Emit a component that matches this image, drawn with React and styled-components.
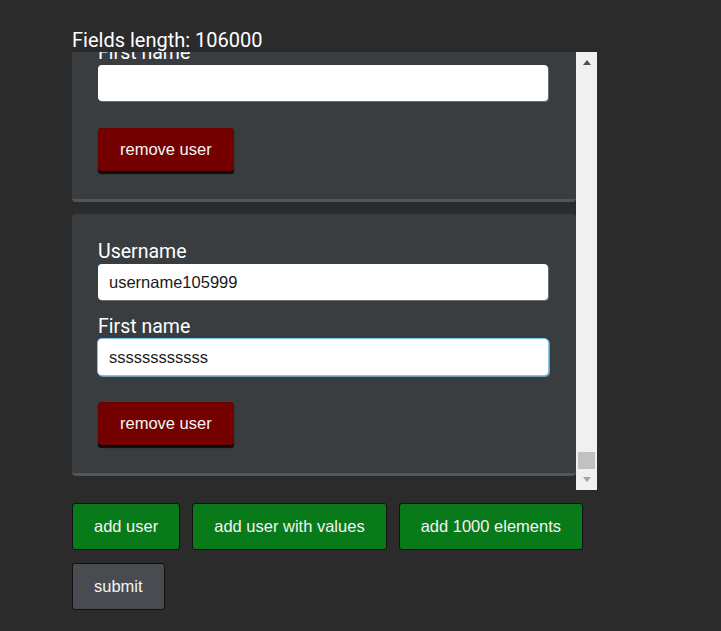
import React from 'react'
import styled, { createGlobalStyle, css } from 'styled-components'

const users = [
  { id: 105998, username: '', firstName: '' },
  { id: 105999, username: 'username105999', firstName: 'ssssssssssss', focused: true },
]

const App = () => {
  return (
    <>
      <GlobalStyle />
      <Page>
        <Title>Fields length: 106000</Title>
        <ListFrame>
          <Viewport>
            {users.map((user) => (
              <UserCard key={user.id}>
                <Field>
                  <Label>Username</Label>
                  <TextInput defaultValue={user.username} />
                </Field>
                <Field>
                  <Label>First name</Label>
                  <TextInput defaultValue={user.firstName} $focused={user.focused} />
                </Field>
                <RemoveButton>remove user</RemoveButton>
              </UserCard>
            ))}
          </Viewport>
          <ScrollBar>
            <ArrowButton><Arrow $dir="up" /></ArrowButton>
            <Track>
              <Thumb />
            </Track>
            <ArrowButton><Arrow $dir="down" /></ArrowButton>
          </ScrollBar>
        </ListFrame>
        <Actions>
          <ActionButton>add user</ActionButton>
          <ActionButton>add user with values</ActionButton>
          <ActionButton>add 1000 elements</ActionButton>
        </Actions>
        <Actions>
          <ActionButton $variant="submit">submit</ActionButton>
        </Actions>
      </Page>
    </>
  )
}

export default App

const GlobalStyle = createGlobalStyle`
  html, body {
    margin: 0;
    padding: 0;
    background: #2b2b2b;
  }
  body {
    font-family: Roboto, "Liberation Sans", sans-serif;
    color: #ffffff;
    min-height: 100vh;
  }
`

const Page = styled.div`
  padding: 28px 0 0 72px;
  min-height: 100vh;
  box-sizing: border-box;
`

const Title = styled.div`
  font-size: 20px;
  line-height: 24px;
  color: #ffffff;
  position: relative;
  z-index: 1;
`

const ListFrame = styled.div`
  display: flex;
  width: 525px;
  height: 438px;
`

const Viewport = styled.div`
  flex: 1;
  display: flex;
  flex-direction: column;
  justify-content: flex-end;
  gap: 12px;
  padding-bottom: 14px;
  overflow: hidden;
`

const UserCard = styled.div`
  flex-shrink: 0;
  background: #3a3d40;
  border-bottom: 3px solid #545658;
  border-radius: 4px;
  padding: 27px 28px 28px 26px;
`

const Field = styled.div`
  & + & {
    margin-top: 16px;
  }
`

const Label = styled.label`
  display: block;
  font-size: 19.5px;
  line-height: 21px;
  margin-bottom: 2px;
  color: #ffffff;
`

const TextInput = styled.input`
  display: block;
  box-sizing: border-box;
  width: 100%;
  height: 36px;
  padding: 0 11px;
  border: none;
  border-radius: 4px;
  background: #ffffff;
  font-family: "Liberation Sans", Arial, sans-serif;
  font-size: 16.5px;
  color: #1a1a1a;
  outline: none;
  box-shadow: 1px 1px 0 #6c6c6c;

  ${({ $focused }) => $focused && css`
    box-shadow: 0 0 0 1px #7fc6e6, 1px 1px 0 1px #6c9fb5;
  `}
`

const RemoveButton = styled.button`
  display: block;
  margin-top: 27px;
  height: 43px;
  padding: 0 21px;
  border: 1px solid #6a0000;
  border-radius: 3px;
  background: #750000;
  color: #f4f4f4;
  font-family: "Liberation Sans", Arial, sans-serif;
  font-size: 16.5px;
  box-shadow: 0 3px 1px #0a0a0a;
  cursor: pointer;
`

const ScrollBar = styled.div`
  width: 21px;
  display: flex;
  flex-direction: column;
  background: #f0f0f0;
`

const ArrowButton = styled.div`
  height: 21px;
  display: flex;
  align-items: center;
  justify-content: center;
`

const Arrow = styled.span`
  width: 0;
  height: 0;
  border-left: 4.5px solid transparent;
  border-right: 4.5px solid transparent;
  ${({ $dir }) => $dir === 'up'
    ? css`border-bottom: 5px solid #505050;`
    : css`border-top: 5px solid #a3a3a3;`}
`

const Track = styled.div`
  flex: 1;
  display: flex;
  flex-direction: column;
  justify-content: flex-end;
  align-items: center;
`

const Thumb = styled.div`
  width: 17px;
  height: 17px;
  background: #c1c1c1;
`

const Actions = styled.div`
  display: flex;
  gap: 12px;
  margin-top: 13px;
`

const ActionButton = styled.button`
  height: 47px;
  padding: 0 21px;
  border: 1px solid #111111;
  border-radius: 3px;
  background: ${({ $variant }) => ($variant === 'submit' ? '#484b50' : '#087a1a')};
  color: #f4f4f4;
  font-family: "Liberation Sans", Arial, sans-serif;
  font-size: 16.5px;
  cursor: pointer;
`
